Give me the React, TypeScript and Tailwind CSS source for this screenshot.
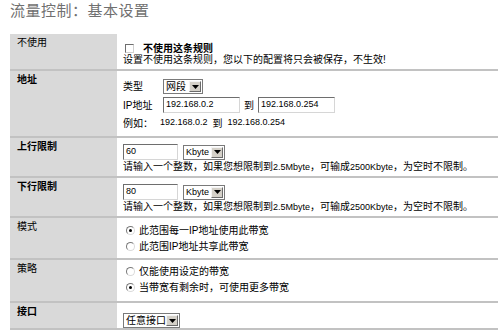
const cjk = "font-['Liberation_Sans','Noto_Sans_CJK_SC',sans-serif]";

function Select({ label, width, small }: { label: string; width: string; small?: boolean }) {
  return (
    <div className={`inline-flex h-[15px] shrink-0 items-center whitespace-nowrap border border-[#7a7a7a] bg-white ${width}`}>
      <span className={`flex-1 overflow-hidden pl-[2px] leading-[13px] text-black ${small ? "text-[9px]" : "text-[10px]"}`}>
        {label}
      </span>
      <span className="mr-[1px] flex h-[11px] w-[12px] shrink-0 items-center justify-center border border-t-[#f4f4f4] border-l-[#f4f4f4] border-b-[#6b6b6b] border-r-[#6b6b6b] bg-[#d4d0c8]">
        <svg width="7" height="4" viewBox="0 0 7 4">
          <path d="M0 0 L7 0 L3.5 4 Z" fill="#000" />
        </svg>
      </span>
    </div>
  );
}

function TextBox({ value, width }: { value: string; width: string }) {
  return (
    <div
      className={`flex h-[16px] shrink-0 items-center border border-t-[#6e6e6e] border-l-[#6e6e6e] border-b-[#d6d6d6] border-r-[#d6d6d6] bg-white pl-[2px] text-[9px] text-black ${width}`}
    >
      {value}
    </div>
  );
}

function Radio({ checked }: { checked?: boolean }) {
  return (
    <span className="mr-[4px] flex h-[9px] w-[9px] shrink-0 items-center justify-center rounded-full border border-t-[#7a7a7a] border-l-[#7a7a7a] border-b-[#dadada] border-r-[#dadada] bg-white">
      {checked && <span className="h-[3px] w-[3px] rounded-full bg-black" />}
    </span>
  );
}

function Row({
  label,
  bold,
  height,
  children,
}: {
  label: string;
  bold?: boolean;
  height: string;
  children: React.ReactNode;
}) {
  return (
    <div className={`flex border-b-2 border-[#c2c2c2] ${height}`}>
      <div className={`w-[107px] shrink-0 bg-[#d9d9d9] pl-[7px] pt-[3px] text-[10px] leading-[12px] ${bold ? "font-bold" : ""}`}>
        {label}
      </div>
      <div className="flex-1 pl-[6px]">{children}</div>
    </div>
  );
}

function Help() {
  return (
    <div className="mt-[1px] whitespace-nowrap text-[10px] leading-[12px]">
      请输入一个整数，如果您想限制到<span className="text-[9px]">2.5Mbyte</span>，可输成
      <span className="text-[9px]">2500Kbyte</span>，为空时不限制。
    </div>
  );
}

export default function App() {
  return (
    <div className={`h-[334px] w-[500px] bg-white pl-[10px] text-black ${cjk}`}>
      <div className="h-[34px] text-[15px] leading-[22px] tracking-[0.5px] text-[#707070]">流量控制：基本设置</div>
      <div className="w-[488px]">
        <Row label="不使用" height="h-[37px]">
          <div className="pt-[9px]">
            <div className="flex h-[11px] items-center">
              <span className="ml-[2px] mr-[9px] h-[9px] w-[9px] border border-t-[#6e6e6e] border-l-[#6e6e6e] border-b-[#d0d0d0] border-r-[#d0d0d0] bg-white" />
              <span className="text-[10px] font-bold">不使用这条规则</span>
            </div>
            <div className="text-[10px] leading-[12px]">设置不使用这条规则，您以下的配置将只会被保存，不生效!</div>
          </div>
        </Row>
        <Row label="地址" bold height="h-[67px]">
          <div className="pt-[8px] text-[10px]">
            <div className="flex h-[15px] items-center">
              <span className="w-[40px]">类型</span>
              <Select label="网段" width="w-[40px]" />
            </div>
            <div className="mt-[3px] flex h-[16px] items-center">
              <span className="w-[40px]">IP地址</span>
              <TextBox value="192.168.0.2" width="w-[77px]" />
              <span className="mx-[4px]">到</span>
              <TextBox value="192.168.0.254" width="w-[77px]" />
            </div>
            <div className="mt-[4px] flex h-[12px] items-center">
              <span className="w-[37px]">例如：</span>
              <span className="text-[9px]">192.168.0.2</span>
              <span className="mx-[5px]">到</span>
              <span className="text-[9px]">192.168.0.254</span>
            </div>
          </div>
        </Row>
        <Row label="上行限制" bold height="h-[40px]">
          <div className="pt-[6px]">
            <div className="flex items-center gap-[5px]">
              <TextBox value="60" width="w-[55px]" />
              <Select label="Kbyte" width="w-[42px]" small />
            </div>
            <Help />
          </div>
        </Row>
        <Row label="下行限制" bold height="h-[40px]">
          <div className="pt-[6px]">
            <div className="flex items-center gap-[5px]">
              <TextBox value="80" width="w-[55px]" />
              <Select label="Kbyte" width="w-[42px]" small />
            </div>
            <Help />
          </div>
        </Row>
        <Row label="模式" height="h-[42px]">
          <div className="pt-[4px] text-[10px]">
            <div className="flex h-[16px] items-center pl-[3px]">
              <Radio checked />
              此范围每一IP地址使用此带宽
            </div>
            <div className="flex h-[16px] items-center pl-[3px]">
              <Radio />
              此范围IP地址共享此带宽
            </div>
          </div>
        </Row>
        <Row label="策略" height="h-[43px]">
          <div className="pt-[3px] text-[10px]">
            <div className="flex h-[16px] items-center pl-[3px]">
              <Radio />
              仅能使用设定的带宽
            </div>
            <div className="flex h-[17px] items-center pl-[3px]">
              <Radio checked />
              当带宽有剩余时，可使用更多带宽
            </div>
          </div>
        </Row>
        <Row label="接口" bold height="h-[27px]">
          <div className="pt-[4px]">
            <Select label="任意接口" width="w-[57px]" />
          </div>
        </Row>
      </div>
    </div>
  );
}
